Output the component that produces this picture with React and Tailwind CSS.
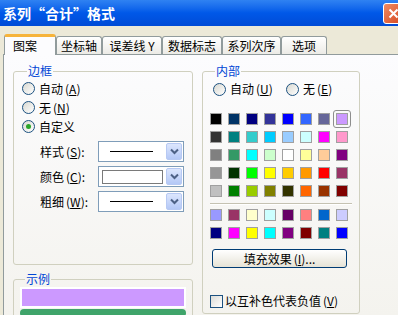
import React from "react";

const topColors = [
  ["#000000", "#003366", "#000080", "#333399", "#0000ff", "#3366ff", "#666699", "#cc99ff"],
  ["#333333", "#008080", "#33cccc", "#00ccff", "#99ccff", "#ccffff", "#ff00ff", "#ff99cc"],
  ["#808080", "#339966", "#00ffff", "#ccffcc", "#ffffff", "#ffff99", "#ffcc99", "#800080"],
  ["#969696", "#003300", "#00ff00", "#ffff00", "#ffcc00", "#ff9900", "#ff0000", "#993366"],
  ["#c0c0c0", "#008000", "#99cc00", "#808000", "#333300", "#ff6600", "#993300", "#800000"],
];

const chartColors = [
  ["#9999ff", "#993366", "#ffffcc", "#ccffff", "#660066", "#ff8080", "#0066cc", "#ccccff"],
  ["#000080", "#ff00ff", "#ffff00", "#00ffff", "#800080", "#800000", "#008080", "#0000ff"],
];

const tabs = [
  { label: "图案", w: "w-[52px]", active: true },
  { label: "坐标轴", w: "w-[46px]" },
  { label: "误差线 Y", w: "w-[60px]" },
  { label: "数据标志", w: "w-[60px]" },
  { label: "系列次序", w: "w-[59px]" },
  { label: "选项", w: "w-[46px]" },
];

const Key = ({ k }) => (
  <span className="ml-[2px]">
    (<u>{k}</u>)
  </span>
);

const Radio = ({ checked }) => (
  <span className="w-[13px] h-[13px] shrink-0 rounded-full border border-[#1c5180] bg-linear-to-br from-[#d8d8d1] to-white flex items-center justify-center">
    {checked && <span className="w-[5px] h-[5px] rounded-full bg-[#2aa52a]" />}
  </span>
);

const Chevron = () => (
  <svg width="9" height="7" viewBox="0 0 9 7">
    <path d="M1 1.5 L4.5 5 L8 1.5" fill="none" stroke="#4d6185" strokeWidth="2" />
  </svg>
);

const Combo = ({ children }) => (
  <div className="w-[86px] h-[21px] border border-[#7f9db9] bg-white flex items-center pl-[3px] pr-[1px]">
    <div className="flex-1 flex items-center">{children}</div>
    <div className="w-[16px] h-[17px] rounded-[2px] border border-[#b7c9f3] bg-linear-to-b from-[#dce6fd] to-[#b4c8f6] flex items-center justify-center">
      <Chevron />
    </div>
  </div>
);

const Swatch = ({ c }) => (
  <span className="w-[12px] h-[12px] border border-[#a0a0a0]" style={{ backgroundColor: c }} />
);

const SwatchRows = ({ rows, selected }) => (
  <div className="flex flex-col gap-[6px]">
    {rows.map((row, i) => (
      <div key={i} className="flex gap-[6px]">
        {row.map((c, j) =>
          selected && i === 0 && j === 7 ? (
            <span key={j} className="-m-[3px] p-[2px] rounded-[3px] border border-[#8e8e8e]">
              <span className="block w-[12px] h-[12px] border border-[#a0a0a0]" style={{ backgroundColor: c }} />
            </span>
          ) : (
            <Swatch key={j} c={c} />
          )
        )}
      </div>
    ))}
  </div>
);

const Legend = ({ children }) => (
  <legend className="ml-[5px] px-[1px] text-[#0046d5] leading-[16px]">{children}</legend>
);

export default function App() {
  return (
    <div className="w-[398px] h-[315px] overflow-hidden bg-[#ece9d8] text-[12px] leading-[16px] text-black font-['Noto_Sans_CJK_SC','Noto_Sans',sans-serif]">
      <div className="h-[26px] flex items-center justify-between pl-[3px] bg-linear-to-b from-[#2f82f2] via-[#0058e8] to-[#004bd6]">
        <span className="text-white font-bold text-[14px] leading-[18px]">系列“合计”格式</span>
        <span className="-mr-[6px] w-[21px] h-[21px] rounded-[3px] border border-white bg-linear-to-br from-[#f08a62] to-[#d4461b] flex items-center justify-center">
          <svg width="11" height="11" viewBox="0 0 11 11">
            <path d="M1.5 1.5 L9.5 9.5 M9.5 1.5 L1.5 9.5" stroke="white" strokeWidth="2" />
          </svg>
        </span>
      </div>

      <div className="pl-[4px] pt-[7px] flex items-end h-[28px]">
        {tabs.map((t) =>
          t.active ? (
            <div
              key={t.label}
              className={`${t.w} h-[21px] -mb-[1px] relative z-10 rounded-t-[3px] border-x border-[#919b9c] border-t-[3px] border-t-[#f6b33a] bg-[#fcfcfe] flex items-center pl-[8px]`}
            >
              {t.label}
            </div>
          ) : (
            <div
              key={t.label}
              className={`${t.w} h-[18px] rounded-t-[3px] border border-b-0 border-[#919b9c] bg-linear-to-b from-white to-[#ecebe6] flex items-center justify-center`}
            >
              {t.label}
            </div>
          )
        )}
      </div>

      <div className="ml-[3px] h-[262px] border-t border-l border-[#919b9c] bg-linear-to-b from-[#fcfcfe] to-[#f4f3ee] flex items-start gap-[9px] pl-[9px] pt-[8px]">
        <div className="w-[180px] shrink-0 flex flex-col">
          <fieldset className="shrink-0 h-[202px] border border-[#d0d0bf] rounded-[3px] px-[8px]">
            <Legend>边框</Legend>
            <div className="flex flex-col">
              {[
                ["自动", "A", false],
                ["无", "N", false],
                ["自定义", null, true],
              ].map(([l, k, c]) => (
                <div key={l} className="h-[19px] flex items-center gap-[4px]">
                  <Radio checked={c} />
                  <span>
                    {l}
                    {k && <Key k={k} />}
                  </span>
                </div>
              ))}
            </div>
            <div className="mt-[5px] flex flex-col gap-[4px] pl-[18px]">
              <div className="flex items-center">
                <span className="w-[58px]">
                  样式<Key k="S" />:
                </span>
                <Combo>
                  <span className="ml-[8px] w-[43px] h-[1px] bg-black" />
                </Combo>
              </div>
              <div className="flex items-center">
                <span className="w-[58px]">
                  颜色<Key k="C" />:
                </span>
                <Combo>
                  <span className="w-[61px] h-[14px] border border-[#7a7a7a] bg-white" />
                </Combo>
              </div>
              <div className="flex items-center">
                <span className="w-[58px]">
                  粗细<Key k="W" />:
                </span>
                <Combo>
                  <span className="ml-[8px] w-[43px] h-[1px] bg-black" />
                </Combo>
              </div>
            </div>
          </fieldset>
          <fieldset className="shrink-0 mt-[6px] h-[60px] border border-[#d0d0bf] rounded-[3px] px-[6px]">
            <Legend>示例</Legend>
            <div className="bg-white px-[2px] pt-[2px] pb-[2px]">
              <div className="h-[17px] bg-[#cc99ff]" />
            </div>
            <div className="mt-[1px] h-[8px] rounded-full bg-[#3fa46a]" />
          </fieldset>
        </div>

        <fieldset className="shrink-0 w-[158px] h-[251px] border border-[#d0d0bf] rounded-[3px] px-[7px]">
          <Legend>内部</Legend>
          <div className="h-[20px] flex items-center">
            <div className="w-[76px] flex items-center gap-[4px] pl-[3px]">
              <Radio />
              <span>
                自动<Key k="U" />
              </span>
            </div>
            <div className="flex items-center gap-[4px]">
              <Radio />
              <span>
                无<Key k="E" />
              </span>
            </div>
          </div>
          <div className="mt-[14px]">
            <SwatchRows rows={topColors} selected />
          </div>
          <div className="mt-[6px] h-[1px] bg-[#c5c2b2] border-b border-white box-content" />
          <div className="mt-[4px]">
            <SwatchRows rows={chartColors} />
          </div>
          <button className="mt-[10px] ml-[2px] w-[135px] h-[19px] rounded-[3px] border border-[#003c74] bg-linear-to-b from-white to-[#e6e3d6] flex items-center justify-center">
            填充效果<Key k="I" />...
          </button>
          <div className="mt-[25px] flex items-center gap-[2px]">
            <span className="w-[13px] h-[13px] border border-[#1c5180] bg-linear-to-br from-[#dcdcd7] to-white" />
            <span>
              以互补色代表负值<Key k="V" />
            </span>
          </div>
        </fieldset>
      </div>
    </div>
  );
}
